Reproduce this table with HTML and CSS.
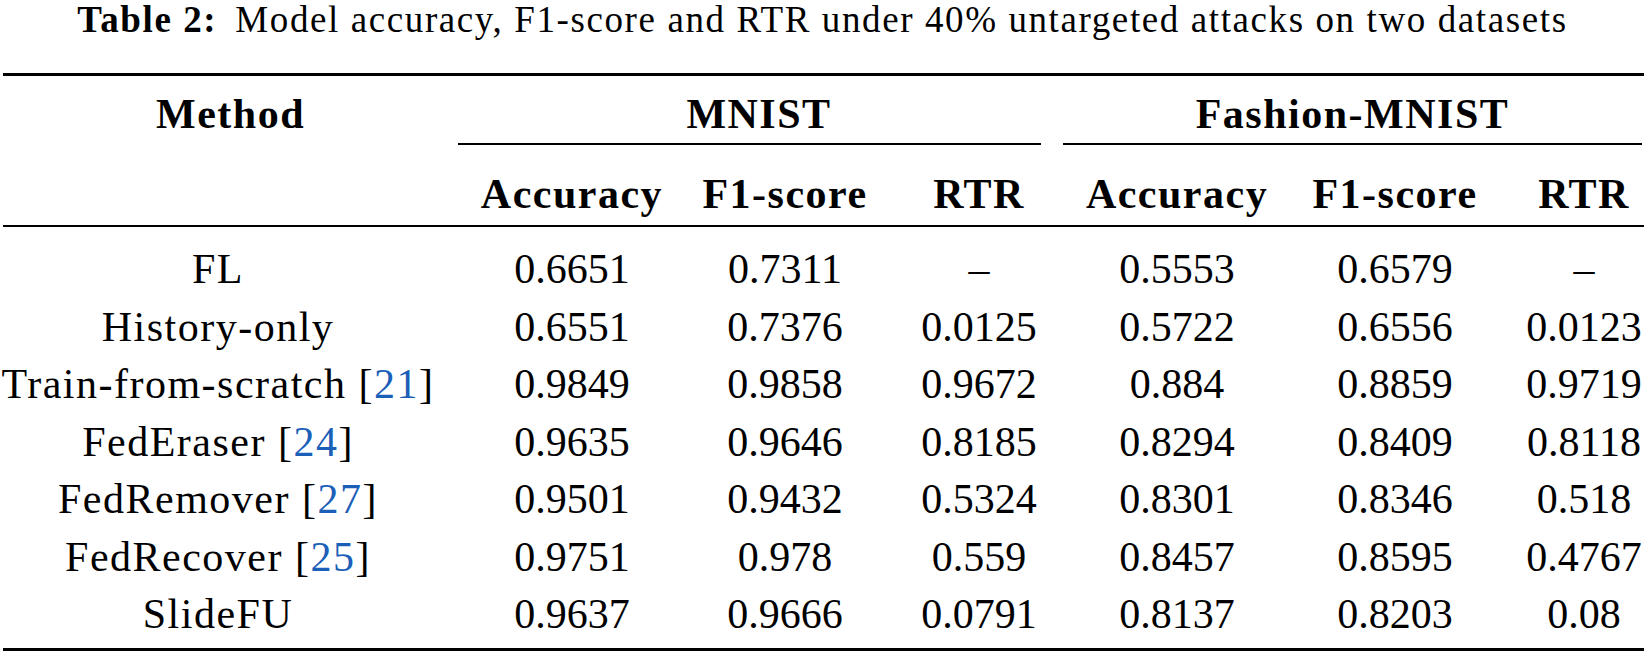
FILE: index.html
```html
<!DOCTYPE html>
<html>
<head>
<meta charset="utf-8">
<link rel="stylesheet" href="styles.css">
</head>
<body>
<div class="page">
  <div class="caption"><span class="cap-label">Table 2:</span><span class="cap-text">Model accuracy, F1-score and RTR under 40% untargeted attacks on two datasets</span></div>
  <div class="tbl">
    <div class="rule rule-heavy"></div>
    <div class="head1">
      <div class="h1-method txt">Method</div>
      <div class="h1-group h1-mnist txt">MNIST</div>
      <div class="h1-group h1-fashion txt">Fashion-MNIST</div>
    </div>
    <div class="grid head2">
      <div class="cell"></div>
      <div class="cell txt">Accuracy</div>
      <div class="cell txt">F1-score</div>
      <div class="cell txt">RTR</div>
      <div class="cell txt">Accuracy</div>
      <div class="cell txt">F1-score</div>
      <div class="cell txt">RTR</div>
    </div>
    <div class="rule rule-light"></div>
    <div class="grid body">
      <div class="cell txt">FL</div>
      <div class="cell">0.6651</div>
      <div class="cell">0.7311</div>
      <div class="cell">–</div>
      <div class="cell">0.5553</div>
      <div class="cell">0.6579</div>
      <div class="cell">–</div>

      <div class="cell txt">History-only</div>
      <div class="cell">0.6551</div>
      <div class="cell">0.7376</div>
      <div class="cell">0.0125</div>
      <div class="cell">0.5722</div>
      <div class="cell">0.6556</div>
      <div class="cell">0.0123</div>

      <div class="cell txt">Train-from-scratch&nbsp;[<span class="ref">21</span>]</div>
      <div class="cell">0.9849</div>
      <div class="cell">0.9858</div>
      <div class="cell">0.9672</div>
      <div class="cell">0.884</div>
      <div class="cell">0.8859</div>
      <div class="cell">0.9719</div>

      <div class="cell txt">FedEraser&nbsp;[<span class="ref">24</span>]</div>
      <div class="cell">0.9635</div>
      <div class="cell">0.9646</div>
      <div class="cell">0.8185</div>
      <div class="cell">0.8294</div>
      <div class="cell">0.8409</div>
      <div class="cell">0.8118</div>

      <div class="cell txt">FedRemover&nbsp;[<span class="ref">27</span>]</div>
      <div class="cell">0.9501</div>
      <div class="cell">0.9432</div>
      <div class="cell">0.5324</div>
      <div class="cell">0.8301</div>
      <div class="cell">0.8346</div>
      <div class="cell">0.518</div>

      <div class="cell txt">FedRecover&nbsp;[<span class="ref">25</span>]</div>
      <div class="cell">0.9751</div>
      <div class="cell">0.978</div>
      <div class="cell">0.559</div>
      <div class="cell">0.8457</div>
      <div class="cell">0.8595</div>
      <div class="cell">0.4767</div>

      <div class="cell txt">SlideFU</div>
      <div class="cell">0.9637</div>
      <div class="cell">0.9666</div>
      <div class="cell">0.0791</div>
      <div class="cell">0.8137</div>
      <div class="cell">0.8203</div>
      <div class="cell">0.08</div>
    </div>
    <div class="rule rule-heavy rule-bottom"></div>
  </div>
</div>
</body>
</html>
```

FILE: styles.css
```css
html, body {
  margin: 0;
  padding: 0;
  background: #ffffff;
}

body {
  font-family: "Liberation Serif", "Times New Roman", serif;
  color: #000000;
  width: 1645px;
  height: 653px;
  overflow: hidden;
}

.page {
  display: flex;
  flex-direction: column;
}

.caption {
  height: 40px;
  line-height: 40px;
  font-size: 37px;
  text-align: center;
  white-space: nowrap;
  letter-spacing: 1.6px;
  margin-bottom: 33px;
}

.cap-label {
  font-weight: bold;
  margin-right: 18px;
}

.tbl {
  margin-left: 3px;
  width: 1641px;
  display: flex;
  flex-direction: column;
}

.rule {
  background: #000000;
  width: 100%;
}

.rule-heavy {
  height: 3px;
}

.rule-light {
  height: 2px;
}

.txt {
  letter-spacing: 1.5px;
}

.head1 {
  display: flex;
  font-weight: bold;
  font-size: 42px;
  line-height: 56px;
}

.h1-method {
  width: 455px;
  text-align: center;
  padding-top: 10px;
  padding-bottom: 3px;
}

.h1-group {
  text-align: center;
  padding-top: 10px;
  padding-bottom: 1px;
  border-bottom: 2px solid #000000;
  white-space: nowrap;
}

.h1-mnist {
  width: 564px;
  padding-left: 19px;
}

.h1-fashion {
  width: 579px;
  margin-left: 22px;
}

.grid {
  display: grid;
  grid-template-columns: 430px 278px 148px 240px 156px 280px 98px;
  font-size: 42px;
}

.head2 {
  font-weight: bold;
  padding-top: 21px;
  padding-bottom: 3px;
  line-height: 56px;
}

.body {
  padding-top: 14px;
  padding-bottom: 4px;
  grid-auto-rows: 57.5px;
  line-height: 57.5px;
}

.cell {
  display: flex;
  justify-content: center;
  white-space: nowrap;
}

.ref {
  color: #1c5fb8;
}
```
